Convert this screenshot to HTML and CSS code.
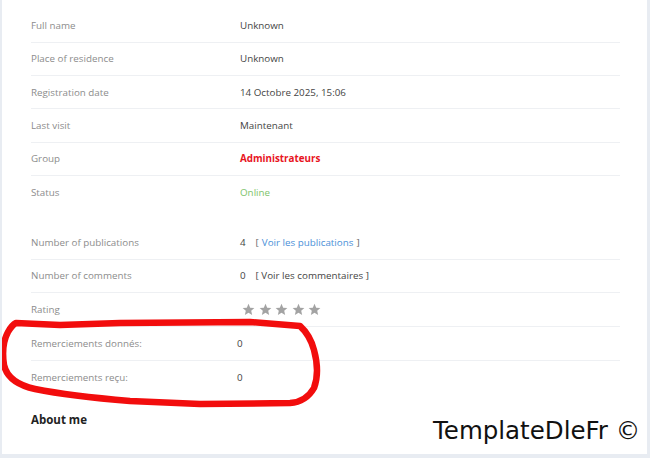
FILE: index.html
```html
<!DOCTYPE html>
<html lang="fr">
<head>
<meta charset="utf-8">
<title>Profile</title>
<link rel="stylesheet" href="styles.css">
</head>
<body>
<div class="page">
  <div class="card">
    <div class="info info-first">
      <div class="row"><span class="label">Full name</span><span class="value">Unknown</span></div>
      <div class="row"><span class="label">Place of residence</span><span class="value">Unknown</span></div>
      <div class="row"><span class="label">Registration date</span><span class="value">14 Octobre 2025, 15:06</span></div>
      <div class="row"><span class="label">Last visit</span><span class="value">Maintenant</span></div>
      <div class="row"><span class="label">Group</span><span class="value group">Administrateurs</span></div>
      <div class="row row-last"><span class="label">Status</span><span class="value online">Online</span></div>
    </div>
    <div class="info info-second">
      <div class="row"><span class="label">Number of publications</span><span class="value"><span class="count">4</span><span class="bracket">[</span> <a class="link" href="#">Voir les publications</a> <span class="bracket">]</span></span></div>
      <div class="row"><span class="label">Number of comments</span><span class="value"><span class="count">0</span>[ Voir les commentaires ]</span></div>
      <div class="row row-rating"><span class="label">Rating</span><span class="value stars">
        <svg class="star" viewBox="0 0 24 24"><polygon points="12,1.5 15.1,8.6 22.8,9.3 17,14.4 18.7,22 12,18 5.3,22 7,14.4 1.2,9.3 8.9,8.6"/></svg>
        <svg class="star" viewBox="0 0 24 24"><polygon points="12,1.5 15.1,8.6 22.8,9.3 17,14.4 18.7,22 12,18 5.3,22 7,14.4 1.2,9.3 8.9,8.6"/></svg>
        <svg class="star" viewBox="0 0 24 24"><polygon points="12,1.5 15.1,8.6 22.8,9.3 17,14.4 18.7,22 12,18 5.3,22 7,14.4 1.2,9.3 8.9,8.6"/></svg>
        <svg class="star" viewBox="0 0 24 24"><polygon points="12,1.5 15.1,8.6 22.8,9.3 17,14.4 18.7,22 12,18 5.3,22 7,14.4 1.2,9.3 8.9,8.6"/></svg>
        <svg class="star" viewBox="0 0 24 24"><polygon points="12,1.5 15.1,8.6 22.8,9.3 17,14.4 18.7,22 12,18 5.3,22 7,14.4 1.2,9.3 8.9,8.6"/></svg>
      </span></div>
      <div class="row row-thanks"><span class="label">Remerciements donnés:</span><span class="value">0</span></div>
      <div class="row row-thanks row-last"><span class="label">Remerciements reçu:</span><span class="value">0</span></div>
    </div>
    <h3 class="about">About me</h3>

    <svg class="scribble" viewBox="0 0 650 458" width="650" height="458">
      <path d="M 16 323 L 60 325 L 120 323 L 250 322 L 300 326 Q 310 335 314 350 Q 320 372 314 388 Q 306 402 290 403 L 200 404 L 130 401 Q 70 396 35 389 Q 8 383 4 365 Q 1 345 8 332 Q 12 325 16 323 Z"/>
    </svg>
    <div class="watermark">TemplateDleFr ©</div>
  </div>
</div>
</body>
</html>
```

FILE: styles.css
```css
html, body {
  margin: 0;
  padding: 0;
}

body {
  background: #e8ecf2;
  font-family: "Open Sans", "Noto Sans", sans-serif;
  font-size: 9.8px;
  color: #444;
}

.page {
  width: 650px;
  height: 458px;
  box-sizing: border-box;
  padding: 0 3px 4px 2px;
}

.card {
  position: relative;
  height: 100%;
  background: #fff;
  box-sizing: border-box;
  padding: 0 27px 0 29px;
  overflow: hidden;
}

.info-first {
  padding-top: 9.5px;
}

.info-second {
  margin-top: 17px;
}

.row {
  display: grid;
  grid-template-columns: 209px 1fr;
  align-items: center;
  height: 33.33px;
  box-sizing: border-box;
  border-bottom: 1px solid #eef0f3;
}

.row-last {
  border-bottom: none;
}

.row-rating {
  height: 34.33px;
}

.row-thanks {
  grid-template-columns: 206px 1fr;
}

.label {
  color: #8c8c8c;
}

.value {
  color: #444;
  display: flex;
  align-items: center;
}

.group {
  color: #e8141e;
  font-weight: 700;
}

.online {
  color: #7cc36a;
}

.count {
  margin-right: 10px;
}

.bracket {
  color: #666;
  white-space: pre;
}

.link {
  color: #4a8fd8;
  text-decoration: none;
  margin: 0 3px;
}

.stars {
  gap: 3.6px;
  padding-left: 2px;
}

.star {
  width: 13px;
  height: 13px;
  fill: #a3a3a3;
}

.about {
  margin: 18px 0 0 0;
  font-size: 11.5px;
  line-height: 16px;
  font-weight: 700;
  color: #222;
}

.scribble {
  position: absolute;
  left: -2px;
  top: 0;
  fill: none;
  stroke: #f20d0d;
  stroke-width: 6.5;
  stroke-linecap: round;
  stroke-linejoin: round;
  pointer-events: none;
}

.watermark {
  position: absolute;
  left: 431px;
  top: 417px;
  font-family: "DejaVu Sans", sans-serif;
  font-size: 24.5px;
  line-height: 28px;
  color: #111;
  white-space: nowrap;
}
```
